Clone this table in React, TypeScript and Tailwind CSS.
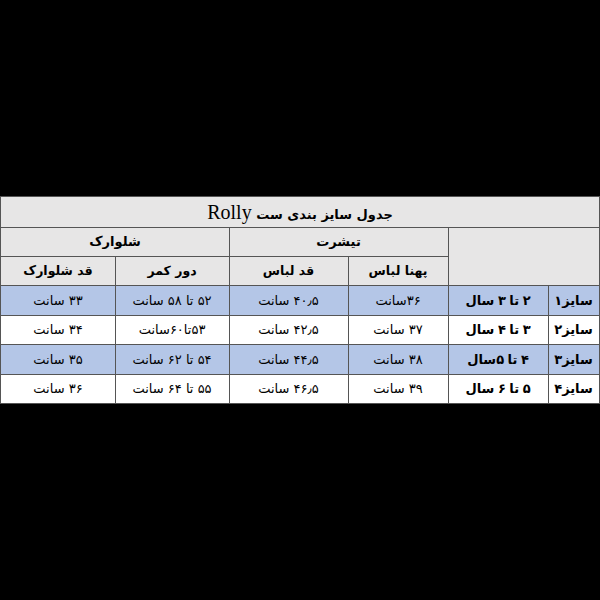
const rows = [
  ["سایز۱", "۲ تا ۳ سال", "۳۶سانت", "۴۰٫۵ سانت", "۵۲ تا ۵۸ سانت", "۳۳ سانت"],
  ["سایز۲", "۳ تا ۴ سال", "۳۷ سانت", "۴۲٫۵ سانت", "۵۳تا۶۰سانت", "۳۴ سانت"],
  ["سایز۳", "۴ تا ۵سال", "۳۸ سانت", "۴۴٫۵ سانت", "۵۴ تا ۶۲ سانت", "۳۵ سانت"],
  ["سایز۴", "۵ تا ۶ سال", "۳۹ سانت", "۴۶٫۵ سانت", "۵۵ تا ۶۴ سانت", "۳۶ سانت"],
];

const cell = "border border-[#555555] p-0 text-center align-middle";
const fa = "font-['DejaVu_Sans',sans-serif]";

export default function App() {
  return (
    <div className="flex h-[600px] w-[600px] items-center justify-center bg-black">
      <table
        dir="rtl"
        className={`w-[598px] table-fixed border-collapse bg-[#e7e6e6] text-black ${fa}`}
      >
        <colgroup>
          <col className="w-[51px]" />
          <col className="w-[100px]" />
          <col className="w-[100px]" />
          <col className="w-[119px]" />
          <col className="w-[114px]" />
          <col className="w-[114px]" />
        </colgroup>
        <tbody>
          <tr className="h-[28px]">
            <td colSpan={6} className={`${cell} text-[13px] font-bold`}>
              جدول سایز بندی ست{" "}
              <span className="font-['Liberation_Serif',serif] text-[20px] font-normal">Rolly</span>
            </td>
          </tr>
          <tr className="h-[29px]">
            <td colSpan={2} rowSpan={2} className={cell}></td>
            <td colSpan={2} className={`${cell} text-[13px] font-bold`}>
              تیشرت
            </td>
            <td colSpan={2} className={`${cell} text-[13px] font-bold`}>
              شلوارک
            </td>
          </tr>
          <tr className="h-[29px]">
            <td className={`${cell} text-[12.5px] font-bold`}>پهنا لباس</td>
            <td className={`${cell} text-[12.5px] font-bold`}>قد لباس</td>
            <td className={`${cell} text-[12.5px] font-bold`}>دور کمر</td>
            <td className={`${cell} text-[12.5px] font-bold`}>قد شلوارک</td>
          </tr>
          {rows.map((r, i) => (
            <tr key={i} className={i % 2 === 0 ? "h-[29.5px] bg-[#b4c6e7]" : "h-[29.5px] bg-white"}>
              <td className={`${cell} text-[13px] font-bold`}>{r[0]}</td>
              <td className={`${cell} text-[13px] font-bold [word-spacing:-1px]`}>{r[1]}</td>
              {r.slice(2).map((v, j) => (
                <td key={j} className={`${cell} text-[13px]`}>
                  {v}
                </td>
              ))}
            </tr>
          ))}
        </tbody>
      </table>
    </div>
  );
}
